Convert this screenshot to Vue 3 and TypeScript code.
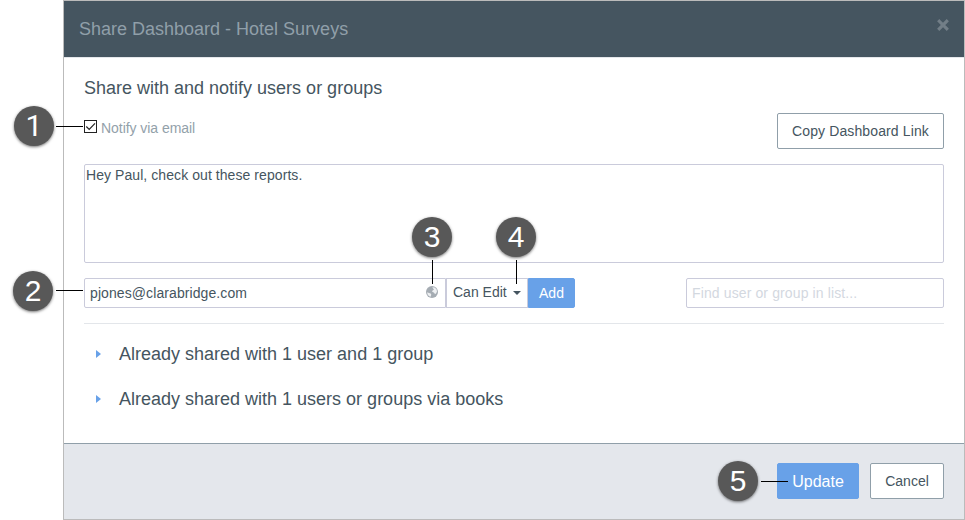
<script setup lang="ts">
import { ref } from 'vue'

interface Callout {
  n: number
  x: number
  y: number
  line: { x: number; y: number; w: number; h: number }
}

const notify = ref(true)
const message = ref('Hey Paul, check out these reports.')
const recipient = ref('pjones@clarabridge.com')
const search = ref('')

const sections: string[] = [
  'Already shared with 1 user and 1 group',
  'Already shared with 1 users or groups via books',
]

const callouts: Callout[] = [
  { n: 1, x: 14, y: 106, line: { x: 56, y: 126, w: 27, h: 1 } },
  { n: 2, x: 13, y: 271, line: { x: 56, y: 290, w: 27, h: 1 } },
  { n: 3, x: 412, y: 217, line: { x: 432, y: 260, w: 1, h: 24 } },
  { n: 4, x: 496, y: 217, line: { x: 516, y: 260, w: 1, h: 24 } },
  { n: 5, x: 718, y: 461, line: { x: 761, y: 481, w: 27, h: 1 } },
]
</script>

<template>
  <div class="stage">
    <section class="modal">
      <header class="head">
        <h1>Share Dashboard - Hotel Surveys</h1>
        <svg class="close" viewBox="0 0 12 12"><path d="M2 2l8 8M10 2l-8 8" /></svg>
      </header>

      <main class="body">
        <div class="top">
          <div>
            <h2>Share with and notify users or groups</h2>
            <label class="notify">
              <input v-model="notify" type="checkbox" class="native" />
              <svg class="box" viewBox="0 0 13 13">
                <rect x=".5" y=".5" width="12" height="12" />
                <path v-if="notify" d="M2.300 6.500l2.900 2.900L11 3.300" />
              </svg>
              <span>Notify via email</span>
            </label>
          </div>
          <button class="btn copy">Copy Dashboard Link</button>
        </div>

        <textarea v-model="message" class="message" spellcheck="false"></textarea>

        <div class="row">
          <div class="recipient">
            <input v-model="recipient" type="text" spellcheck="false" />
            <svg class="globe" viewBox="0 0 12 12">
              <circle cx="6" cy="6" r="6" />
              <path d="M6.300 1.200L8.600 1.500 10.500 3.300 11 5.500 10.200 7.200 9 8.300 8.300 7 7.300 6.200 6 5.600 6.600 4.500 7.900 3.800 7.200 2.600zM1.200 6.200L3 7 4.700 7.600 5.300 8.800 4.600 10.800 2.900 10 1.500 8.200z" />
            </svg>
          </div>
          <button class="perm">Can Edit<i class="caret"></i></button>
          <button class="btn primary add">Add</button>
          <input v-model="search" class="find" type="text" placeholder="Find user or group in list..." />
        </div>

        <ul class="sections">
          <li v-for="s in sections" :key="s"><i class="arrow"></i>{{ s }}</li>
        </ul>
      </main>

      <footer class="foot">
        <button class="btn primary update">Update</button>
        <button class="btn cancel">Cancel</button>
      </footer>
    </section>

    <template v-for="c in callouts" :key="c.n">
      <span
        class="line"
        :style="{ left: c.line.x + 'px', top: c.line.y + 'px', width: c.line.w + 'px', height: c.line.h + 'px' }"
      ></span>
      <span class="badge" :class="{ one: c.n === 1 }" :style="{ left: c.x + 'px', top: c.y + 'px' }">{{ c.n }}</span>
    </template>
  </div>
</template>

<style>
body {
  margin: 0;
  background: #fff;
}
</style>

<style scoped>
* {
  box-sizing: border-box;
}
.stage {
  position: relative;
  width: 965px;
  height: 520px;
  padding-left: 63px;
  overflow: hidden;
  font: 14px/20px "Liberation Sans", Arial, sans-serif;
  color: #455560;
}
.modal {
  display: flex;
  flex-direction: column;
  height: 520px;
  border: 1px solid #bbb;
  background: #fff;
}
.head {
  display: flex;
  justify-content: space-between;
  height: 57px;
  padding: 18px 15px 0;
  background: #455560;
  border-bottom: 1px solid #e4e7eb;
}
h1,
h2 {
  margin: 0;
  font-size: 18px;
  line-height: 20px;
  font-weight: 400;
}
h1 {
  color: #909fa9;
}
.close {
  width: 12px;
  height: 12px;
}
.close path {
  stroke: #727e87;
  stroke-width: 3.4;
  stroke-linecap: square;
  transform: scale(0.92);
  transform-origin: center;
}
.body {
  flex: 1;
  padding: 20px 20px 0;
}
.top {
  display: flex;
  justify-content: space-between;
  height: 86px;
}
.notify {
  display: flex;
  align-items: center;
  gap: 4px;
  height: 20px;
  margin-top: 20px;
  color: #93a1aa;
  letter-spacing: -0.05px;
}
.native {
  position: absolute;
  opacity: 0;
}
.box {
  width: 13px;
  height: 13px;
  margin-top: -3px;
  fill: #fff;
  stroke: #222;
}
.box path {
  fill: none;
  stroke-width: 1.2;
}
button,
input,
textarea {
  margin: 0;
  font: inherit;
  color: inherit;
  outline: 0;
}
.btn {
  padding: 0;
  border: 1px solid #909fa9;
  border-radius: 2px;
  background: #fff;
}
.copy {
  width: 167px;
  height: 36px;
  margin-top: 35px;
  letter-spacing: 0.12px;
}
.message {
  display: block;
  width: 860px;
  height: 99px;
  padding: 0 1px;
  border: 1px solid #cacbdb;
  border-radius: 2px;
  resize: none;
  letter-spacing: 0.07px;
}
.row {
  display: flex;
  height: 61px;
  padding-top: 15px;
  border-bottom: 1px solid #e3e6ea;
}
.recipient {
  display: flex;
  align-items: center;
  width: 362px;
  height: 30px;
  padding: 0 7px 0 5px;
  border: 1px solid #cacbdb;
  border-radius: 2px 0 0 2px;
}
.recipient input {
  flex: 1;
  min-width: 0;
  padding: 0;
  border: 0;
  letter-spacing: 0.09px;
}
.globe {
  width: 12px;
  height: 12px;
  margin-top: -2px;
  fill: #a5acb3;
}
.globe path {
  fill: #eef0f2;
}
.perm {
  display: flex;
  align-items: center;
  gap: 6px;
  width: 82px;
  height: 30px;
  padding: 0 0 2px 6px;
  border: 1px solid #cacbdb;
  background: #fff;
}
.caret {
  margin-top: 2px;
  border: 4px solid transparent;
  border-top-color: #455560;
  border-bottom: 0;
}
.primary {
  border-color: #68a1e8;
  background: #68a1e8;
  color: #fff;
}
.add {
  width: 47px;
  height: 30px;
  border-radius: 0 2px 2px 0;
}
.find {
  width: 258px;
  height: 30px;
  margin-left: auto;
  padding: 0 5px;
  border: 1px solid #cacbdb;
  border-radius: 2px;
  letter-spacing: 0.12px;
}
.find::placeholder {
  color: #d3d8df;
  opacity: 1;
}
.sections {
  display: flex;
  flex-direction: column;
  gap: 25px;
  margin: 0;
  padding: 20px 0 0 12px;
  list-style: none;
  font-size: 18px;
  line-height: 20px;
}
.sections li {
  display: flex;
  align-items: center;
  gap: 18px;
}
.arrow {
  border: 4.5px solid transparent;
  border-left: 5px solid #68a1e8;
  border-right: 0;
}
.foot {
  display: flex;
  justify-content: flex-end;
  gap: 11px;
  height: 76px;
  padding: 19px 20px 0;
  border-top: 1px solid #909fa9;
  background: #e4e7ec;
}
.update {
  width: 82px;
  height: 36px;
  padding-top: 2px;
  font-size: 16px;
}
.cancel {
  width: 74px;
  height: 36px;
}
.line {
  position: absolute;
  background: #000;
}
.badge {
  position: absolute;
  width: 40px;
  height: 40px;
  border-radius: 50%;
  background: #585858;
  box-shadow: 0 1px 3px rgba(0, 0, 0, 0.55);
  color: #fff;
  font-size: 30px;
  line-height: 39px;
  text-align: center;
}
.one {
  font-family: Roboto, sans-serif;
}
</style>
